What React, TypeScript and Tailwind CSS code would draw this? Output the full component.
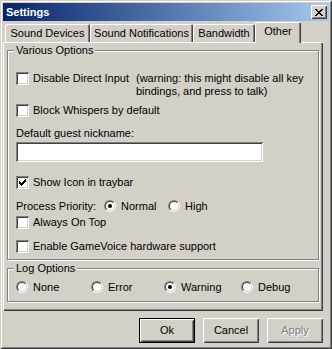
import React from "react";

const raised =
  "shadow-[inset_1px_1px_0_#fff,inset_-1px_-1px_0_#404040,inset_2px_2px_0_#d4d0c8,inset_-2px_-2px_0_#808080]";
const sunken =
  "shadow-[inset_1px_1px_0_#808080,inset_-1px_-1px_0_#fff,inset_2px_2px_0_#404040,inset_-2px_-2px_0_#d4d0c8]";

function Checkbox({ checked = false }: { checked?: boolean }) {
  return (
    <div className={`w-[13px] h-[13px] shrink-0 bg-white flex items-center justify-center ${sunken}`}>
      {checked && (
        <svg width="7" height="7" viewBox="0 0 7 7" shapeRendering="crispEdges">
          <path d="M0 2h1v1h1v1h1v-1h1v-1h1v-1h1v-1h1v3h-1v1h-1v1h-1v1h-1v1h-1v-1h-1v-1h-1z" fill="#000" />
        </svg>
      )}
    </div>
  );
}

function Radio({ checked = false }: { checked?: boolean }) {
  return (
    <div className="w-[12px] h-[12px] shrink-0 rounded-full border border-t-[#808080] border-l-[#808080] border-r-white border-b-white">
      <div className="w-full h-full rounded-full bg-white border border-t-[#404040] border-l-[#404040] border-r-[#d4d0c8] border-b-[#d4d0c8] flex items-center justify-center">
        {checked && <div className="w-[4px] h-[4px] rounded-full bg-black" />}
      </div>
    </div>
  );
}

function CheckRow({ label, checked, className = "" }: { label: string; checked?: boolean; className?: string }) {
  return (
    <div className={`flex items-center gap-[4px] h-[13px] ${className}`}>
      <Checkbox checked={checked} />
      <span>{label}</span>
    </div>
  );
}

function RadioOpt({ label, checked, w }: { label: string; checked?: boolean; w: string }) {
  return (
    <div className={`flex items-center gap-[5px] ${w}`}>
      <Radio checked={checked} />
      <span>{label}</span>
    </div>
  );
}

function Tab({ label, w, selected = false }: { label: string; w: string; selected?: boolean }) {
  return (
    <div
      className={`${w} flex items-center justify-center bg-[#d4d0c8] rounded-t-[2px] shadow-[inset_1px_1px_0_#fff,inset_-1px_0_0_#404040,inset_-2px_0_0_#808080] ${
        selected ? "h-[21px] -mb-px relative z-10 pb-[2px]" : "h-[18px]"
      }`}
    >
      {label}
    </div>
  );
}

function GroupBox({ title, className, children }: { title: string; className: string; children: React.ReactNode }) {
  return (
    <div className={`relative border border-[#808080] shadow-[inset_1px_1px_0_#fff,1px_1px_0_#fff] ${className}`}>
      <span className="absolute left-[6px] top-[-7px] px-[2px] bg-[#d4d0c8] leading-[13px]">{title}</span>
      {children}
    </div>
  );
}

export default function App() {
  return (
    <div className="w-[332px] h-[349px] bg-[#d4d0c8] p-[3px] flex flex-col text-[11px] leading-[13px] text-black font-['Liberation_Sans',Arial,sans-serif] shadow-[inset_1px_1px_0_#d4d0c8,inset_-1px_-1px_0_#404040,inset_2px_2px_0_#fff,inset_-2px_-2px_0_#808080]">
      {/* title bar */}
      <div className="h-[18px] shrink-0 flex items-center justify-between pl-[3px] pr-[2px] bg-gradient-to-r from-[#0a246a] to-[#a6caf0]">
        <span className="text-white font-bold">Settings</span>
        <div className={`w-[16px] h-[14px] bg-[#d4d0c8] flex items-center justify-center ${raised}`}>
          <svg width="8" height="7" viewBox="0 0 8 7" shapeRendering="crispEdges">
            <path
              d="M0 0h2v1h1v1h2v-1h1v-1h2v1h-1v1h-1v1h-1v1h1v1h1v1h1v1h-2v-1h-1v-1h-2v1h-1v1h-2v-1h1v-1h1v-1h1v-1h-1v-1h-1v-1h-1z"
              fill="#000"
            />
          </svg>
        </div>
      </div>

      {/* tabs */}
      <div className="h-[21px] shrink-0 flex items-end pl-[2px]">
        <Tab label="Sound Devices" w="w-[85px]" />
        <Tab label="Sound Notifications" w="w-[103px]" />
        <Tab label="Bandwidth" w="w-[62px]" />
        <Tab label="Other" w="w-[46px]" selected />
      </div>

      {/* tab panel */}
      <div className="w-[320px] h-[269px] shrink-0 pt-[8px] pl-[4px] shadow-[inset_1px_1px_0_#fff,inset_-1px_-1px_0_#404040,inset_-2px_-2px_0_#808080]">
        <GroupBox title="Various Options" className="w-[312px] h-[210px] pt-[21px] pl-[8px]">
          <div className="flex items-start h-[26px]">
            <div className="flex items-start gap-[4px] w-[120px]">
              <Checkbox />
              <span>Disable Direct Input</span>
            </div>
            <div className="leading-[13px]">
              (warning: this might disable all key
              <br />
              bindings, and press to talk)
            </div>
          </div>
          <CheckRow label="Block Whispers by default" className="mt-[6px]" />
          <div className="mt-[10px] h-[13px]">Default guest nickname:</div>
          <div className={`mt-[2px] w-[247px] h-[20px] bg-white ${sunken}`} />
          <CheckRow label="Show Icon in traybar" checked className="mt-[14px]" />
          <div className="mt-[11px] h-[12px] flex items-center">
            <span className="w-[88px]">Process Priority:</span>
            <RadioOpt label="Normal" checked w="w-[64px]" />
            <RadioOpt label="High" w="w-[60px]" />
          </div>
          <CheckRow label="Always On Top" className="mt-[4px]" />
          <CheckRow label="Enable GameVoice hardware support" className="mt-[11px]" />
        </GroupBox>

        <GroupBox title="Log Options" className="mt-[8px] w-[312px] h-[34px] pt-[12px] pl-[8px]">
          <div className="h-[12px] flex items-center">
            <RadioOpt label="None" w="w-[75px]" />
            <RadioOpt label="Error" w="w-[73px]" />
            <RadioOpt label="Warning" checked w="w-[77px]" />
            <RadioOpt label="Debug" w="w-[70px]" />
          </div>
        </GroupBox>
      </div>

      {/* buttons */}
      <div className="w-[320px] mt-[7px] flex justify-end gap-[8px]">
        <button className={`w-[56px] h-[25px] border border-black bg-[#d4d0c8] ${raised}`}>Ok</button>
        <button className={`w-[56px] h-[25px] bg-[#d4d0c8] ${raised}`}>Cancel</button>
        <button
          disabled
          className={`w-[56px] h-[25px] bg-[#d4d0c8] text-[#808080] [text-shadow:1px_1px_0_#fff] ${raised}`}
        >
          Apply
        </button>
      </div>
    </div>
  );
}
